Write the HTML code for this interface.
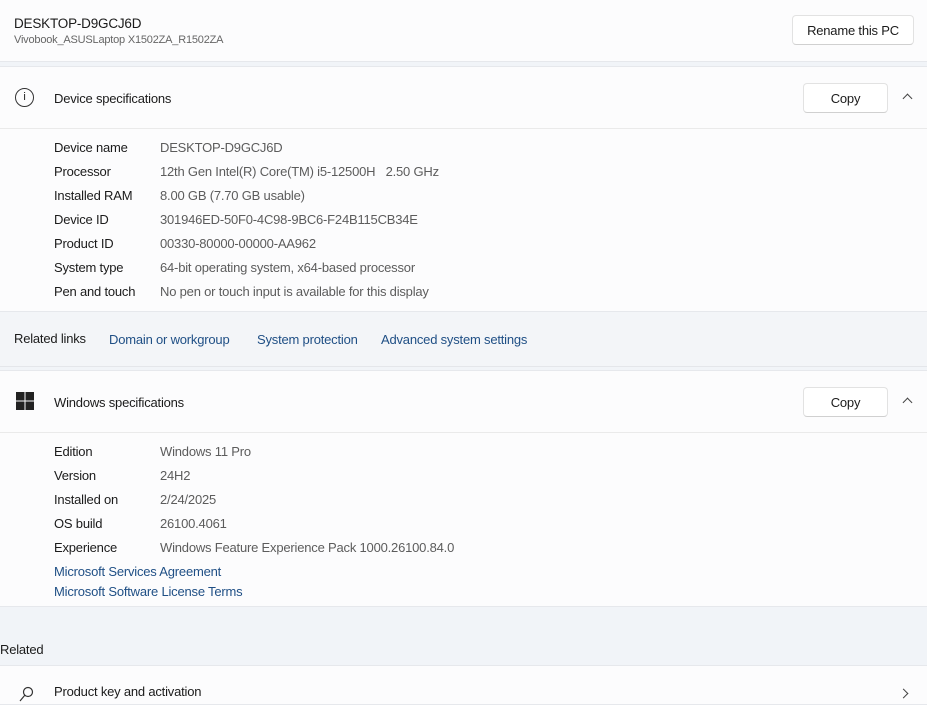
<!DOCTYPE html>
<html><head><meta charset="utf-8"><style>
*{margin:0;padding:0;box-sizing:border-box}
body{width:927px;height:700px;overflow:hidden;background:#f1f4f8;font-family:"Liberation Sans",sans-serif;font-size:13px;color:#1b1b1b;position:relative;letter-spacing:-0.2px}
.abs{position:absolute}
.card{position:absolute;left:0;width:927px;background:#fcfcfd;border-top:1px solid #e6e8ec;border-bottom:1px solid #e6e8ec}
.btn{position:absolute;background:#fff;border:1px solid #e2e2e2;border-bottom-color:#d0d0d0;border-radius:4px;text-align:center;font-size:13px}
.lbl{position:absolute;left:54px}
.val{position:absolute;left:160px;color:#5c5c5c}
.link{color:#1f4f85}
.chev{position:absolute;right:16px;width:7px;height:7px;border-left:1.3px solid #444;border-top:1.3px solid #444}
</style></head><body>
<div class="card" style="top:0;height:62px;border-top:none"></div>
<div class="abs" style="left:14px;top:16px;font-size:13.5px">DESKTOP-D9GCJ6D</div>
<div class="abs" style="left:14px;top:34px;font-size:11px;color:#666">Vivobook_ASUSLaptop X1502ZA_R1502ZA</div>
<div class="btn" style="left:792px;top:15px;width:122px;height:30px;line-height:29px">Rename this PC</div>

<div class="card" style="top:66px;height:246px"></div>
<div class="abs" style="left:0;top:128px;width:927px;border-top:1px solid #eaeaea"></div>
<div class="abs" style="left:15px;top:88px;width:19px;height:19px;border:1.3px solid #333;border-radius:50%;font-size:11px;text-align:center;line-height:16px">i</div>
<div class="abs" style="left:54px;top:91px">Device specifications</div>
<div class="btn" style="left:803px;top:83px;width:85px;height:30px;line-height:29px">Copy</div>
<div class="chev" style="top:95px;transform:rotate(45deg)"></div>

<div class="lbl" style="top:140px">Device name</div><div class="val" style="top:140px">DESKTOP-D9GCJ6D</div>
<div class="lbl" style="top:164px">Processor</div><div class="val" style="top:164px">12th Gen Intel(R) Core(TM) i5-12500H&nbsp;&nbsp;&nbsp;2.50 GHz</div>
<div class="lbl" style="top:188px">Installed RAM</div><div class="val" style="top:188px">8.00 GB (7.70 GB usable)</div>
<div class="lbl" style="top:212px">Device ID</div><div class="val" style="top:212px">301946ED-50F0-4C98-9BC6-F24B115CB34E</div>
<div class="lbl" style="top:236px">Product ID</div><div class="val" style="top:236px">00330-80000-00000-AA962</div>
<div class="lbl" style="top:260px">System type</div><div class="val" style="top:260px">64-bit operating system, x64-based processor</div>
<div class="lbl" style="top:284px">Pen and touch</div><div class="val" style="top:284px">No pen or touch input is available for this display</div>

<div class="abs" style="left:0;top:312px;width:927px;height:55px;background:#f3f5f8;border-bottom:1px solid #e4e6ea"></div>
<div class="abs" style="left:14px;top:331px">Related links</div>
<div class="abs link" style="left:109px;top:332px">Domain or workgroup</div>
<div class="abs link" style="left:257px;top:332px">System protection</div>
<div class="abs link" style="left:381px;top:332px">Advanced system settings</div>

<div class="card" style="top:370px;height:237px"></div>
<div class="abs" style="left:0;top:432px;width:927px;border-top:1px solid #eaeaea"></div>
<svg class="abs" style="left:16px;top:392px" width="18" height="18"><rect x="0" y="0" width="8.5" height="8.5" fill="#222"/><rect x="9.5" y="0" width="8.5" height="8.5" fill="#222"/><rect x="0" y="9.5" width="8.5" height="8.5" fill="#222"/><rect x="9.5" y="9.5" width="8.5" height="8.5" fill="#222"/></svg>
<div class="abs" style="left:54px;top:395px">Windows specifications</div>
<div class="btn" style="left:803px;top:387px;width:85px;height:30px;line-height:29px">Copy</div>
<div class="chev" style="top:399px;transform:rotate(45deg)"></div>

<div class="lbl" style="top:444px">Edition</div><div class="val" style="top:444px">Windows 11 Pro</div>
<div class="lbl" style="top:468px">Version</div><div class="val" style="top:468px">24H2</div>
<div class="lbl" style="top:492px">Installed on</div><div class="val" style="top:492px">2/24/2025</div>
<div class="lbl" style="top:516px">OS build</div><div class="val" style="top:516px">26100.4061</div>
<div class="lbl" style="top:540px">Experience</div><div class="val" style="top:540px">Windows Feature Experience Pack 1000.26100.84.0</div>
<div class="lbl link" style="top:564px">Microsoft Services Agreement</div>
<div class="lbl link" style="top:584px">Microsoft Software License Terms</div>

<div class="abs" style="left:0;top:642px;font-size:13px">Related</div>
<div class="card" style="top:665px;height:40px"></div>
<svg class="abs" style="left:18px;top:686px" width="18" height="16" fill="none" stroke="#333" stroke-width="1.2"><circle cx="10" cy="6" r="4.5"/><path d="M7 9 L2 15"/></svg>
<div class="abs" style="left:54px;top:684px">Product key and activation</div>
<div class="abs" style="left:900px;top:690px;width:7px;height:7px;border-right:1.3px solid #444;border-top:1.3px solid #444;transform:rotate(45deg)"></div>
</body></html>
